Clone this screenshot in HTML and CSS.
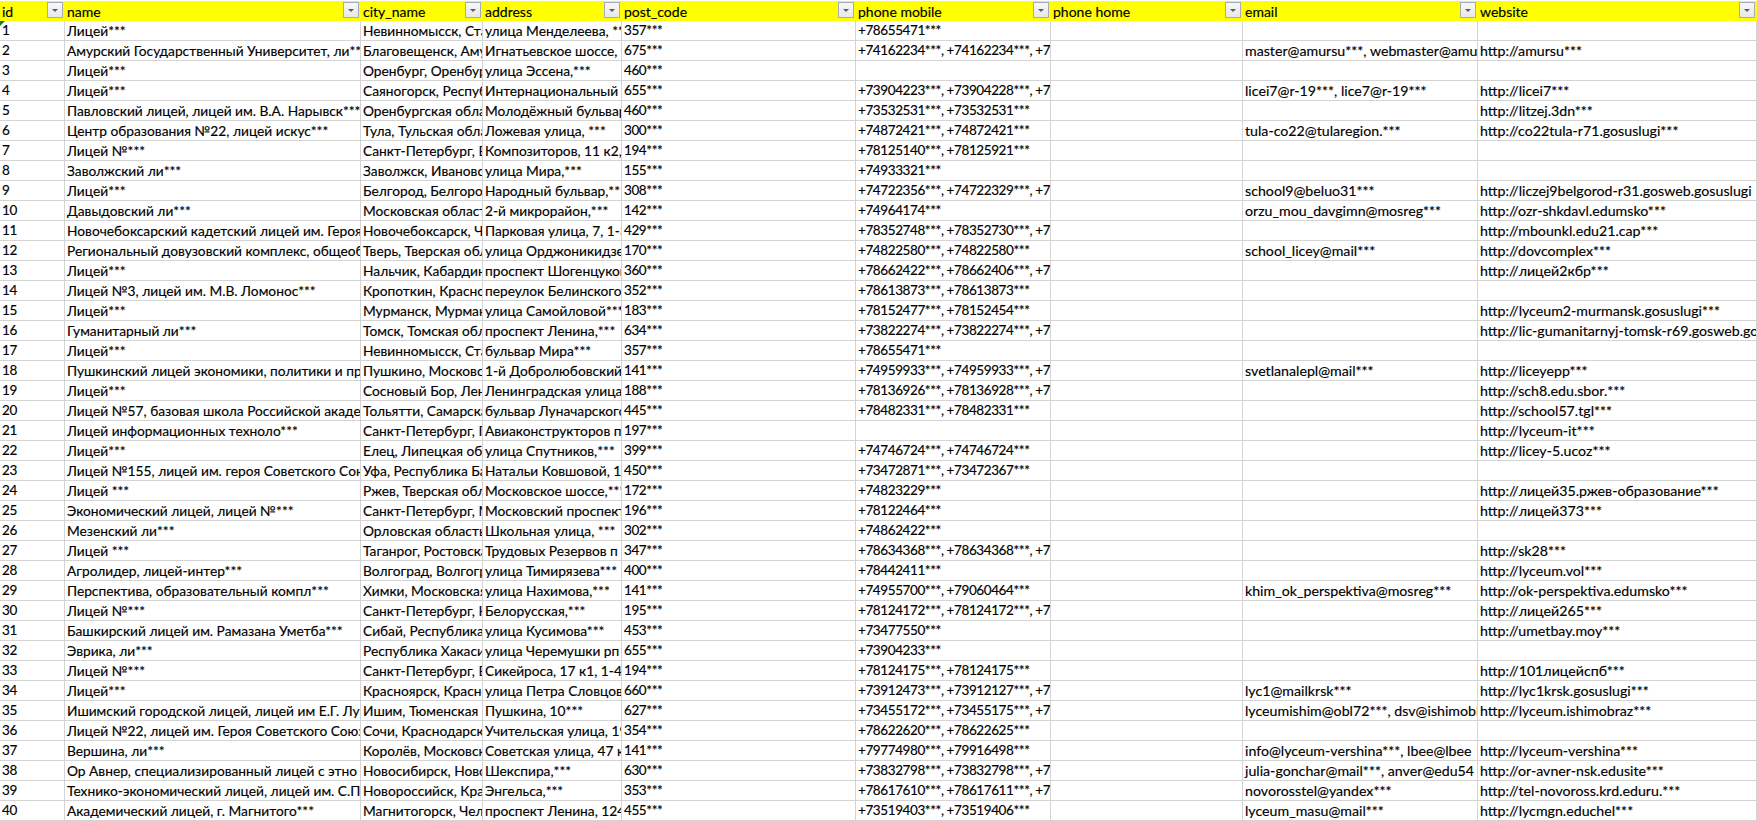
FILE: index.html
```html
<!DOCTYPE html>
<html lang="ru">
<head>
<meta charset="utf-8">
<title>Лицеи</title>
<link rel="stylesheet" href="styles.css">
</head>
<body>
<table class="sheet">
<colgroup><col class="c-id"><col class="c-name"><col class="c-city"><col class="c-addr"><col class="c-post"><col class="c-mobile"><col class="c-home"><col class="c-email"><col class="c-web"></colgroup>
<thead>
<tr><th>id<span class="filter"></span></th><th>name<span class="filter"></span></th><th>city_name<span class="filter"></span></th><th>address<span class="filter"></span></th><th>post_code<span class="filter"></span></th><th>phone mobile<span class="filter"></span></th><th>phone home<span class="filter"></span></th><th>email<span class="filter"></span></th><th>website<span class="filter"></span></th></tr>
</thead>
<tbody>
<tr><td class="flagged">1<span class="flag"></span></td><td>Лицей***</td><td>Невинномысск, Став</td><td>улица Менделеева, ***</td><td>357***</td><td>+78655471***</td><td></td><td></td><td></td></tr>
<tr><td>2</td><td>Амурский Государственный Университет, ли***</td><td>Благовещенск, Амур</td><td>Игнатьевское шоссе, 2</td><td>675***</td><td>+74162234***, +74162234***, +7</td><td></td><td>master@amursu***, webmaster@amursu</td><td>http://amursu***</td></tr>
<tr><td>3</td><td>Лицей***</td><td>Оренбург, Оренбург</td><td>улица Эссена,***</td><td>460***</td><td></td><td></td><td></td><td></td></tr>
<tr><td>4</td><td>Лицей***</td><td>Саяногорск, Респуб</td><td>Интернациональный</td><td>655***</td><td>+73904223***, +73904228***, +7</td><td></td><td>licei7@r-19***, lice7@r-19***</td><td>http://licei7***</td></tr>
<tr><td>5</td><td>Павловский лицей, лицей им. В.А. Нарывск***</td><td>Оренбургская облас</td><td>Молодёжный бульвар</td><td>460***</td><td>+73532531***, +73532531***</td><td></td><td></td><td>http://litzej.3dn***</td></tr>
<tr><td>6</td><td>Центр образования №22, лицей искус***</td><td>Тула, Тульская обла</td><td>Ложевая улица, ***</td><td>300***</td><td>+74872421***, +74872421***</td><td></td><td>tula-co22@tularegion.***</td><td>http://co22tula-r71.gosuslugi***</td></tr>
<tr><td>7</td><td>Лицей №***</td><td>Санкт-Петербург, В</td><td>Композиторов, 11 к2,</td><td>194***</td><td>+78125140***, +78125921***</td><td></td><td></td><td></td></tr>
<tr><td>8</td><td>Заволжский ли***</td><td>Заволжск, Ивановск</td><td>улица Мира,***</td><td>155***</td><td>+74933321***</td><td></td><td></td><td></td></tr>
<tr><td>9</td><td>Лицей***</td><td>Белгород, Белгород</td><td>Народный бульвар,***</td><td>308***</td><td>+74722356***, +74722329***, +7</td><td></td><td>school9@beluo31***</td><td>http://liczej9belgorod-r31.gosweb.gosuslugi</td></tr>
<tr><td>10</td><td>Давыдовский ли***</td><td>Московская область</td><td>2-й микрорайон,***</td><td>142***</td><td>+74964174***</td><td></td><td>orzu_mou_davgimn@mosreg***</td><td>http://ozr-shkdavl.edumsko***</td></tr>
<tr><td>11</td><td>Новочебоксарский кадетский лицей им. Героя</td><td>Новочебоксарск, Чу</td><td>Парковая улица, 7, 1-3</td><td>429***</td><td>+78352748***, +78352730***, +7</td><td></td><td></td><td>http://mbounkl.edu21.cap***</td></tr>
<tr><td>12</td><td>Региональный довузовский комплекс, общеоб</td><td>Тверь, Тверская обл</td><td>улица Орджоникидзе</td><td>170***</td><td>+74822580***, +74822580***</td><td></td><td>school_licey@mail***</td><td>http://dovcomplex***</td></tr>
<tr><td>13</td><td>Лицей***</td><td>Нальчик, Кабардино</td><td>проспект Шогенцуков</td><td>360***</td><td>+78662422***, +78662406***, +7</td><td></td><td></td><td>http://лицей2кбр***</td></tr>
<tr><td>14</td><td>Лицей №3, лицей им. М.В. Ломонос***</td><td>Кропоткин, Краснод</td><td>переулок Белинского</td><td>352***</td><td>+78613873***, +78613873***</td><td></td><td></td><td></td></tr>
<tr><td>15</td><td>Лицей***</td><td>Мурманск, Мурманс</td><td>улица Самойловой***</td><td>183***</td><td>+78152477***, +78152454***</td><td></td><td></td><td>http://lyceum2-murmansk.gosuslugi***</td></tr>
<tr><td>16</td><td>Гуманитарный ли***</td><td>Томск, Томская обла</td><td>проспект Ленина,***</td><td>634***</td><td>+73822274***, +73822274***, +7</td><td></td><td></td><td>http://lic-gumanitarnyj-tomsk-r69.gosweb.gos</td></tr>
<tr><td>17</td><td>Лицей***</td><td>Невинномысск, Став</td><td>бульвар Мира***</td><td>357***</td><td>+78655471***</td><td></td><td></td><td></td></tr>
<tr><td>18</td><td>Пушкинский лицей экономики, политики и пра</td><td>Пушкино, Московск</td><td>1-й Добролюбовский</td><td>141***</td><td>+74959933***, +74959933***, +7</td><td></td><td>svetlanalepl@mail***</td><td>http://liceyepp***</td></tr>
<tr><td>19</td><td>Лицей***</td><td>Сосновый Бор, Лени</td><td>Ленинградская улица</td><td>188***</td><td>+78136926***, +78136928***, +7</td><td></td><td></td><td>http://sch8.edu.sbor.***</td></tr>
<tr><td>20</td><td>Лицей №57, базовая школа Российской академ</td><td>Тольятти, Самарская</td><td>бульвар Луначарского</td><td>445***</td><td>+78482331***, +78482331***</td><td></td><td></td><td>http://school57.tgl***</td></tr>
<tr><td>21</td><td>Лицей информационных техноло***</td><td>Санкт-Петербург, П</td><td>Авиаконструкторов пр</td><td>197***</td><td></td><td></td><td></td><td>http://lyceum-it***</td></tr>
<tr><td>22</td><td>Лицей***</td><td>Елец, Липецкая обл</td><td>улица Спутников,***</td><td>399***</td><td>+74746724***, +74746724***</td><td></td><td></td><td>http://licey-5.ucoz***</td></tr>
<tr><td>23</td><td>Лицей №155, лицей им. героя Советского Союз</td><td>Уфа, Республика Ба</td><td>Натальи Ковшовой, 1</td><td>450***</td><td>+73472871***, +73472367***</td><td></td><td></td><td></td></tr>
<tr><td>24</td><td>Лицей ***</td><td>Ржев, Тверская обл</td><td>Московское шоссе,***</td><td>172***</td><td>+74823229***</td><td></td><td></td><td>http://лицей35.ржев-образование***</td></tr>
<tr><td>25</td><td>Экономический лицей, лицей №***</td><td>Санкт-Петербург, М</td><td>Московский проспект</td><td>196***</td><td>+78122464***</td><td></td><td></td><td>http://лицей373***</td></tr>
<tr><td>26</td><td>Мезенский ли***</td><td>Орловская область,</td><td>Школьная улица, ***</td><td>302***</td><td>+74862422***</td><td></td><td></td><td></td></tr>
<tr><td>27</td><td>Лицей ***</td><td>Таганрог, Ростовска</td><td>Трудовых Резервов п</td><td>347***</td><td>+78634368***, +78634368***, +7</td><td></td><td></td><td>http://sk28***</td></tr>
<tr><td>28</td><td>Агролидер, лицей-интер***</td><td>Волгоград, Волгогра</td><td>улица Тимирязева***</td><td>400***</td><td>+78442411***</td><td></td><td></td><td>http://lyceum.vol***</td></tr>
<tr><td>29</td><td>Перспектива, образовательный компл***</td><td>Химки, Московская</td><td>улица Нахимова,***</td><td>141***</td><td>+74955700***, +79060464***</td><td></td><td>khim_ok_perspektiva@mosreg***</td><td>http://ok-perspektiva.edumsko***</td></tr>
<tr><td>30</td><td>Лицей №***</td><td>Санкт-Петербург, Н</td><td>Белорусская,***</td><td>195***</td><td>+78124172***, +78124172***, +7</td><td></td><td></td><td>http://лицей265***</td></tr>
<tr><td>31</td><td>Башкирский лицей им. Рамазана Уметба***</td><td>Сибай, Республика</td><td>улица Кусимова***</td><td>453***</td><td>+73477550***</td><td></td><td></td><td>http://umetbay.moy***</td></tr>
<tr><td>32</td><td>Эврика, ли***</td><td>Республика Хакасия</td><td>улица Черемушки рп</td><td>655***</td><td>+73904233***</td><td></td><td></td><td></td></tr>
<tr><td>33</td><td>Лицей №***</td><td>Санкт-Петербург, В</td><td>Сикейроса, 17 к1, 1-4</td><td>194***</td><td>+78124175***, +78124175***</td><td></td><td></td><td>http://101лицейспб***</td></tr>
<tr><td>34</td><td>Лицей***</td><td>Красноярск, Красно</td><td>улица Петра Словцов</td><td>660***</td><td>+73912473***, +73912127***, +7</td><td></td><td>lyc1@mailkrsk***</td><td>http://lyc1krsk.gosuslugi***</td></tr>
<tr><td>35</td><td>Ишимский городской лицей, лицей им Е.Г. Лу</td><td>Ишим, Тюменская</td><td>Пушкина, 10***</td><td>627***</td><td>+73455172***, +73455175***, +7</td><td></td><td>lyceumishim@obl72***, dsv@ishimobl</td><td>http://lyceum.ishimobraz***</td></tr>
<tr><td>36</td><td>Лицей №22, лицей им. Героя Советского Союз</td><td>Сочи, Краснодарск</td><td>Учительская улица, 19</td><td>354***</td><td>+78622620***, +78622625***</td><td></td><td></td><td></td></tr>
<tr><td>37</td><td>Вершина, ли***</td><td>Королёв, Московска</td><td>Советская улица, 47 к</td><td>141***</td><td>+79774980***, +79916498***</td><td></td><td>info@lyceum-vershina***, lbee@lbee</td><td>http://lyceum-vershina***</td></tr>
<tr><td>38</td><td>Ор Авнер, специализированный лицей с этно</td><td>Новосибирск, Новос</td><td>Шекспира,***</td><td>630***</td><td>+73832798***, +73832798***, +7</td><td></td><td>julia-gonchar@mail***, anver@edu54</td><td>http://or-avner-nsk.edusite***</td></tr>
<tr><td>39</td><td>Технико-экономический лицей, лицей им. С.П</td><td>Новороссийск, Крас</td><td>Энгельса,***</td><td>353***</td><td>+78617610***, +78617611***, +7</td><td></td><td>novorosstel@yandex***</td><td>http://tel-novoross.krd.eduru.***</td></tr>
<tr><td>40</td><td>Академический лицей, г. Магнитого***</td><td>Магнитогорск, Челя</td><td>проспект Ленина, 124</td><td>455***</td><td>+73519403***, +73519406***</td><td></td><td>lyceum_masu@mail***</td><td>http://lycmgn.educhel***</td></tr>
</tbody>
</table>
</body>
</html>
```
FILE: styles.css
```css
html, body {
  margin: 0;
  background: #fff;
  overflow: hidden;
}
body {
  padding-top: 1px;
  font-family: Lato, "Open Sans", sans-serif;
  font-size: 14px;
  color: #000;
  -webkit-text-stroke: 0.15px #000;
}
.sheet {
  table-layout: fixed;
  width: 1757px;
  border-collapse: separate;
  border-spacing: 0;
}
.c-id { width: 65px; }
.c-name { width: 296px; }
.c-city { width: 122px; }
.c-addr { width: 139px; }
.c-post { width: 234px; }
.c-mobile { width: 195px; }
.c-home { width: 192px; }
.c-email { width: 235px; }
.c-web { width: 279px; }
th, td {
  box-sizing: border-box;
  padding: 0 0 0 2px;
  overflow: hidden;
  white-space: nowrap;
  text-align: left;
  font-weight: 400;
  line-height: 19px;
}
th {
  position: relative;
  height: 20px;
  background: #ffff00;
}
td {
  height: 20px;
  border-right: 1px solid #d4d4d4;
  border-bottom: 1px solid #d4d4d4;
}
/* Numeric columns: tabular digits set tighter */
td:nth-child(1), td:nth-child(5), td:nth-child(6) {
  font-size: 13.5px;
  letter-spacing: -0.4px;
}
/* Cyrillic columns */
td:nth-child(2), td:nth-child(3), td:nth-child(4) {
  font-size: 13.75px;
}
/* Latin columns */
td:nth-child(8), td:nth-child(9) {
  font-size: 14.2px;
}
.filter {
  position: absolute;
  top: 1px;
  right: 2px;
  box-sizing: border-box;
  width: 16px;
  height: 16px;
  border: 1px solid #a5acb5;
  background: linear-gradient(#f7f7f7, #e8e8e8);
}
.filter::after {
  content: "";
  position: absolute;
  left: 4px;
  top: 6px;
  border-left: 3px solid transparent;
  border-right: 3px solid transparent;
  border-top: 3px solid #5f5f5f;
}
.flagged {
  position: relative;
}
.flag {
  position: absolute;
  left: 0;
  top: 0;
  border-top: 5px solid #1f7a1f;
  border-right: 5px solid transparent;
}
```
